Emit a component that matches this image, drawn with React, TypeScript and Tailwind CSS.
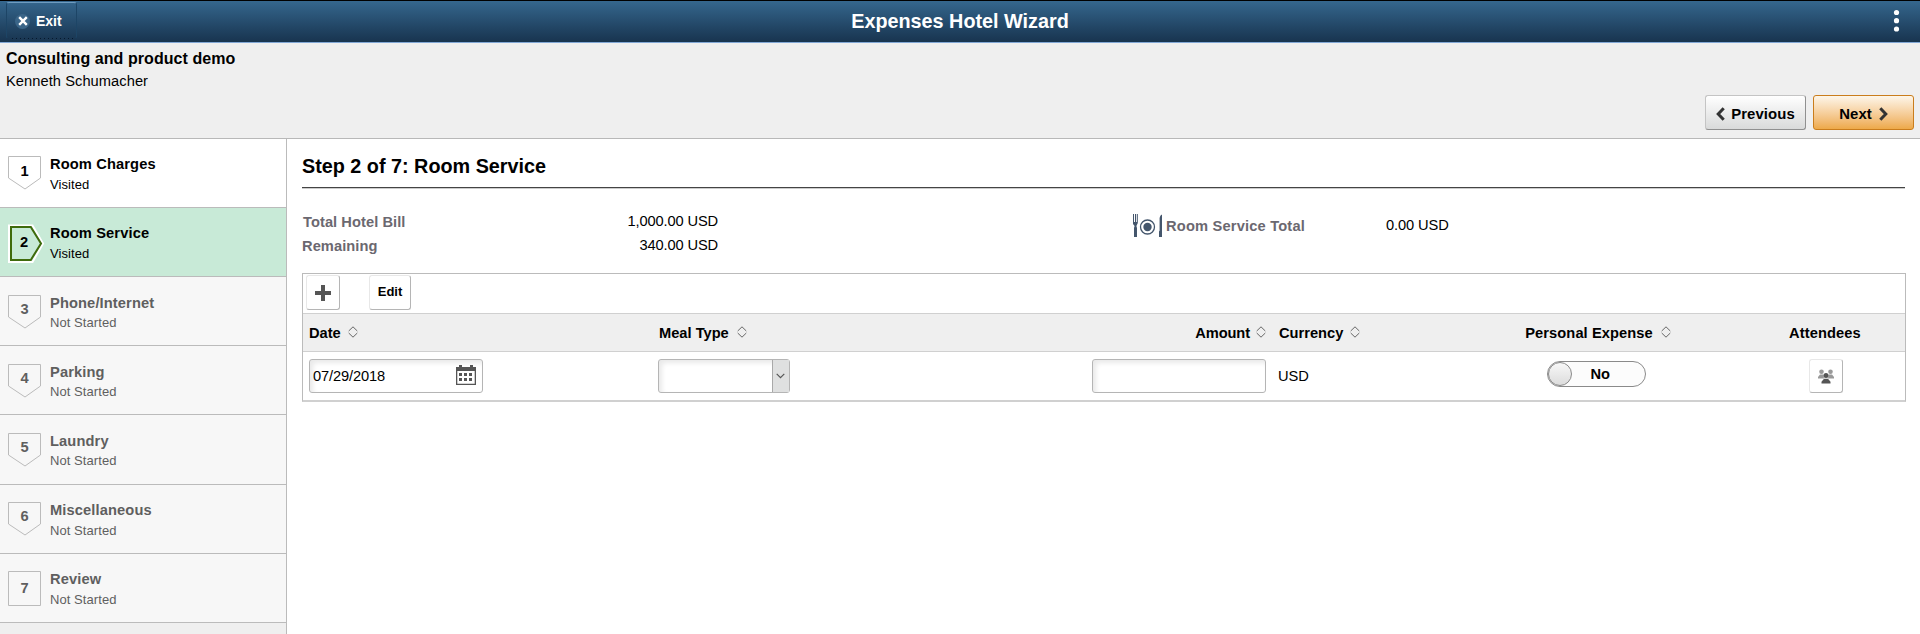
import React from 'react';
import clsx from 'clsx';

interface Step {
  id: number;
  title: string;
  status: string;
  low?: boolean;
  tall?: boolean;
}

const ACTIVE_STEP = 2;

const steps: Step[] = [
  { id: 1, title: 'Room Charges', status: 'Visited' },
  { id: 2, title: 'Room Service', status: 'Visited' },
  { id: 3, title: 'Phone/Internet', status: 'Not Started', low: true },
  { id: 4, title: 'Parking', status: 'Not Started', low: true },
  { id: 5, title: 'Laundry', status: 'Not Started', low: true, tall: true },
  { id: 6, title: 'Miscellaneous', status: 'Not Started' },
  { id: 7, title: 'Review', status: 'Not Started' },
];

const StepBadge: React.FC<{ step: Step }> = ({ step }) => {
  const active = step.id === ACTIVE_STEP;
  const last = step.id === steps.length;
  return (
    <div className="relative w-[42px] shrink-0">
      <svg width="38" height="40" className="block" fill="none">
        {active ? (
          <>
            <path d="M1 1.5H24.5L35 19.5L24.5 38H1Z" stroke="#fff" strokeWidth="2" />
            <path d="M3 3H22.8L33 19.5L22.8 36H3Z" stroke="#3f6b0c" strokeWidth="2" />
          </>
        ) : (
          <path
            d={last ? 'M.5 .5H32.5V34.5H.5Z' : 'M.5 .5H32.5V22L17 33L.5 22Z'}
            stroke="#bbb"
            fill={step.id === 1 ? '#fff' : 'none'}
          />
        )}
      </svg>
      <span
        className={clsx(
          'absolute left-0 text-center text-[14.67px] leading-5 font-bold',
          active && 'top-2 w-[32px]',
          !active && 'w-[33px]',
          !active && (last ? 'top-[7px]' : step.id === 1 ? 'top-[5px]' : 'top-1')
        )}
      >
        {step.id}
      </span>
    </div>
  );
};

const StepItem: React.FC<{ step: Step }> = ({ step }) => {
  const active = step.id === ACTIVE_STEP;
  return (
    <li
      className={clsx(
        'flex border-b border-[#bbb] pl-2',
        step.tall ? 'h-[70px]' : 'h-[69px]',
        active && 'bg-[#c8ead7]',
        step.id === 1 && 'bg-white',
        step.id > 2 && 'bg-[#f7f7f7] text-[#5f5f5f]'
      )}
    >
      <div className={step.low ? 'pt-[18px]' : active ? 'pt-4' : 'pt-[17px]'}>
        <StepBadge step={step} />
      </div>
      <div className={step.low ? 'pt-4' : 'pt-[15px]'}>
        <div
          className={clsx(
            'text-[14.67px] leading-5 font-bold tracking-[0.12px]',
            step.low ? 'mb-px' : 'mb-0.5'
          )}
        >
          {step.title}
        </div>
        <div className="text-[13px] leading-[17px] tracking-[0.07px]">{step.status}</div>
      </div>
    </li>
  );
};

const SortIcon: React.FC<{ className?: string }> = ({ className }) => (
  <svg
    width="10"
    height="12"
    fill="none"
    stroke="#666"
    strokeWidth="1"
    className={clsx('mt-[3px] shrink-0', className)}
  >
    <path d="M.7 5L5 .8L9.3 5M.7 7L5 11.2L9.3 7" />
  </svg>
);

const CalendarIcon = () => (
  <svg width="20" height="20" fill="#555">
    <path fillRule="evenodd" d="M0 2H3V0H6V2H14V0H17V2H20V20H0ZM1.3 6V18.7H18.7V6Z" />
    <path d="M3 8h3v3H3zM8 8h3v3H8zM13 8h3v3h-3zM3 13h3v3H3zM8 13h3v3H8zM13 13h3v3h-3z" />
  </svg>
);

const DiningIcon = () => (
  <svg width="30" height="24" fill="#44566c" className="mt-px">
    <path d="M0 0H1V8H2V0H3V8H3.8V0H4.8V9L3.4 12L4 14V23H1V14L1.6 12L0 10Z" />
    <circle cx="14.5" cy="13" r="7" fill="none" stroke="#44566c" strokeWidth="1.3" />
    <circle cx="14.5" cy="13" r="4.2" />
    <path d="M29 0.5V23H26V17.5L26.6 16.5V4C27 2 28 .8 29 .5Z" />
  </svg>
);

const PeopleIcon = () => (
  <svg width="16" height="15">
    <g fill="#999">
      <circle cx="3.5" cy="2.8" r="2.3" />
      <circle cx="12.5" cy="2.8" r="2.3" />
      <path d="M0 9.6V8L2 5.6H5.4L6 9.6ZM16 9.6V8L14 5.6H10.6L10 9.6Z" />
    </g>
    <circle cx="8" cy="6.6" r="2.5" fill="#555" />
    <path d="M3.5 14.5V12.8L6 9.8H10L12.5 12.8V14.5Z" fill="#555" />
  </svg>
);

const toolButton =
  'flex justify-center rounded-[3px] border border-t-[#e8e8e8] border-l-[#e8e8e8] border-r-[#b5b5b5] border-b-[#b5b5b5] bg-white';

const inputBox =
  'flex h-[34px] rounded-[3px] border border-[#b5b5b5] bg-white shadow-[inset_3px_3px_5px_rgba(0,0,0,0.09)]';

const tableGrid = 'grid grid-cols-[350px_347px_272px_177px_298px_158px]';

const TopBar = () => (
  <header className="grid h-[43px] grid-cols-[1fr_auto_1fr] border-t border-b border-t-black border-b-[#82a8d6] bg-linear-to-b from-[#35678e] to-[#18344f] text-white">
    <div className="pt-px pl-1.5">
      <button className="flex h-[37px] w-[71px] items-center rounded-[3px] border border-[#1d4566] border-t-[#6f9cc0] border-b-transparent pt-px pl-2">
        <span className="flex size-[15px] items-center justify-center rounded-full bg-[#3a6588]">
          <svg width="10" height="10" stroke="#fff" strokeWidth="2.4">
            <path d="M1.2 1.2L8.8 8.8M8.8 1.2L1.2 8.8" />
          </svg>
        </span>
        <span className="ml-1.5 text-[14px] leading-5 font-bold">Exit</span>
      </button>
      <div className="-mt-px ml-1.5 h-px w-[62px] bg-[repeating-linear-gradient(90deg,#06182c_0_1px,transparent_1px_4px)]" />
    </div>
    <h1 className="pt-2 text-[19.8px] leading-6 font-bold">Expenses Hotel Wizard</h1>
    <div className="flex justify-end pt-2 pr-5">
      <svg width="7" height="24" fill="#fff">
        <circle cx="3.5" cy="3.5" r="2.6" />
        <circle cx="3.5" cy="11.7" r="2.6" />
        <circle cx="3.5" cy="20" r="2.6" />
      </svg>
    </div>
  </header>
);

const SubHeader = () => (
  <div className="flex h-24 justify-between border-b border-[#b8b8b8] bg-[#efefef]">
    <div className="pt-1.5 pl-1.5">
      <div className="text-[16px] leading-5 font-bold tracking-[0.07px]">
        Consulting and product demo
      </div>
      <div className="mt-0.5 text-[14.67px] leading-5 tracking-[0.06px]">Kenneth Schumacher</div>
    </div>
    <div className="flex items-end gap-[7px] pr-1.5 pb-2">
      <button className="flex h-[35px] w-[101px] items-center justify-center gap-1.5 rounded-[3px] border border-[#c4c4c4] border-r-[#909090] border-b-[#909090] bg-linear-to-b from-white to-[#d9dada] pt-0.5 text-[14.9px] leading-5 font-bold tracking-[0.1px]">
        <svg width="9" height="14" fill="none" stroke="#333" strokeWidth="3">
          <path d="M7.7 1.2L2.2 7L7.7 12.8" />
        </svg>
        Previous
      </button>
      <button className="flex h-[35px] w-[101px] items-center justify-center gap-[7px] rounded-[3px] border border-[#ca7d1c] bg-linear-to-b from-[#fdf6ea] to-[#eda948] pt-0.5 text-[14.9px] leading-5 font-bold">
        Next
        <svg width="9" height="14" fill="none" stroke="#333" strokeWidth="3">
          <path d="M1.3 1.2L6.8 7L1.3 12.8" />
        </svg>
      </button>
    </div>
  </div>
);

const Summary = () => (
  <div className="flex h-[85px] pt-[22px] text-[14.67px] leading-6">
    <div className="flex w-[416px] justify-between">
      <div className="font-bold tracking-[0.06px] text-[#6b6870]">
        <div className="pl-px">Total Hotel Bill</div>
        <div>Remaining</div>
      </div>
      <div className="-mt-px text-right tracking-[-0.13px]">
        <div>1,000.00 USD</div>
        <div>340.00 USD</div>
      </div>
    </div>
    <div className="ml-[415px] flex w-[253px] pt-[3px]">
      <DiningIcon />
      <span className="ml-[3px] pt-px font-bold tracking-[0.18px] text-[#6b6870]">
        Room Service Total
      </span>
    </div>
    <div className="pt-[3px] tracking-[-0.1px]">0.00 USD</div>
  </div>
);

const ExpenseTable = () => (
  <div className="w-[1604px] border border-b-2 border-[#bbb] border-b-[#d0d0d0] text-[14.67px] leading-5">
    <div className="flex h-[39px] gap-[29px] pt-px pl-[3px]">
      <button className={clsx(toolButton, 'h-[35px] w-[34px] items-center')}>
        <svg width="16" height="16" fill="#555">
          <path d="M6 0H10V6H16V10H10V16H6V10H0V6H6Z" />
        </svg>
      </button>
      <button className={clsx(toolButton, 'h-[35px] w-[42px] pt-[6px] text-[13px] font-bold')}>
        Edit
      </button>
    </div>
    <div
      className={clsx(
        tableGrid,
        'h-[39px] border-t border-b border-[#d0d0d0] bg-[#efefef] pt-[9px] font-bold'
      )}
    >
      <div className="flex pl-1.5">
        Date <SortIcon className="ml-[7px]" />
      </div>
      <div className="flex pl-1.5">
        Meal Type <SortIcon className="ml-2" />
      </div>
      <div className="flex justify-end pr-1.5 tracking-[-0.1px]">
        Amount <SortIcon className="ml-1.5" />
      </div>
      <div className="flex pl-[7px]">
        Currency <SortIcon className="ml-[7px]" />
      </div>
      <div className="flex justify-center tracking-[0.08px]">
        Personal Expense <SortIcon className="ml-2" />
      </div>
      <div className="pr-0.5 text-center tracking-[0.1px]">Attendees</div>
    </div>
    <div className={clsx(tableGrid, 'h-12 pt-[7px]')}>
      <div className="pl-1.5">
        <div className={clsx(inputBox, 'w-[174px] justify-between pt-[5px] pr-1.5 pl-[3px]')}>
          <span className="pt-px tracking-[-0.12px]">07/29/2018</span>
          <CalendarIcon />
        </div>
      </div>
      <div className="pl-[5px]">
        <div className={clsx(inputBox, 'w-[132px] justify-end')}>
          <div className="flex w-[17px] items-center justify-center border-l border-[#a9a9a9] bg-[#dfe0e0] pr-px">
            <svg width="9" height="6" fill="none" stroke="#555" strokeWidth="1.2">
              <path d="M.7 .8L4.5 4.6L8.3 .8" />
            </svg>
          </div>
        </div>
      </div>
      <div className="flex justify-end pr-1.5">
        <div className={clsx(inputBox, 'w-[174px]')} />
      </div>
      <div className="pt-[7px] pl-1.5">USD</div>
      <div className="flex justify-center pt-0.5 pr-1">
        <div className="flex h-[26px] w-[99px] items-center rounded-full border border-[#8a8a8a] bg-[#fcfcfc]">
          <span className="size-6 shrink-0 rounded-full border border-[#8a8a8a] bg-linear-to-b from-[#f8f8f8] to-[#dcdcdc]" />
          <span className="ml-[19px] font-bold">No</span>
        </div>
      </div>
      <div className="flex justify-center">
        <button className={clsx(toolButton, 'h-[34px] w-[34px] items-center')}>
          <PeopleIcon />
        </button>
      </div>
    </div>
  </div>
);

const App: React.FC = () => (
  <div className="flex h-[634px] flex-col overflow-hidden bg-white font-['Liberation_Sans',Arial,sans-serif] text-black">
    <TopBar />
    <SubHeader />
    <div className="flex flex-1">
      <nav className="w-[287px] border-r border-[#bbb] bg-[#efefef]">
        <ul>
          {steps.map((step) => (
            <StepItem key={step.id} step={step} />
          ))}
        </ul>
      </nav>
      <main className="flex-1 pl-[15px]">
        <h2 className="h-[49px] w-[1603px] border-b border-[#444] pt-[15px] text-[19.8px] leading-6 font-bold shadow-[0_1px_0_#ccc]">
          Step 2 of 7: Room Service
        </h2>
        <Summary />
        <ExpenseTable />
      </main>
    </div>
  </div>
);

export default App;
